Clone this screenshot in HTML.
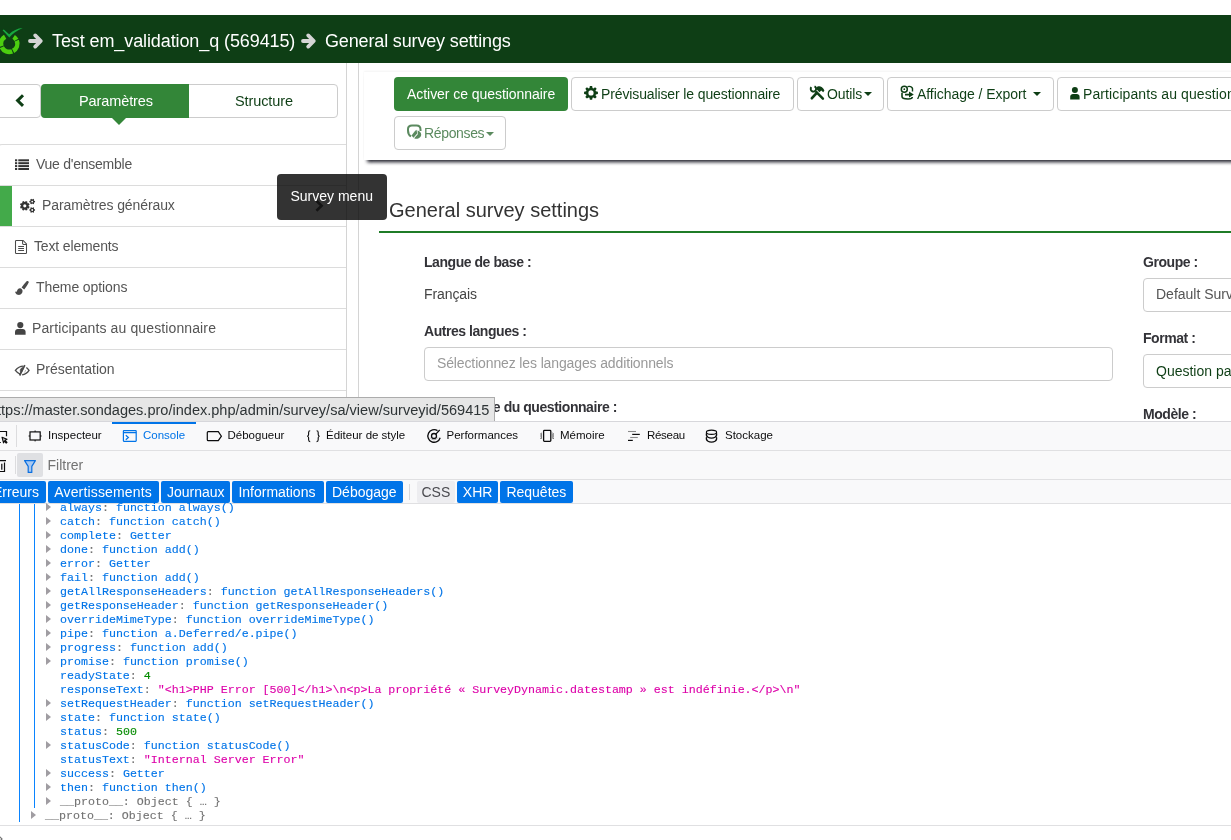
<!DOCTYPE html>
<html><head><meta charset="utf-8">
<style>
*{box-sizing:border-box;margin:0;padding:0}
html,body{width:1231px;height:840px;overflow:hidden;background:#fff;font-family:"Liberation Sans",sans-serif;position:relative}
body{will-change:transform}
.a{position:absolute;white-space:nowrap}
svg{position:absolute;overflow:visible}
#hdr{left:0;top:15px;width:1231px;height:48px;background:#0e3e15}
.htxt{color:#fff;font-size:18px;line-height:18px;letter-spacing:-0.1px}
.vline{position:absolute;width:1px;background:#d4d4d4}
.hl{position:absolute;left:0;width:346px;height:1px;background:#dcdcdc}
.mtxt{font-size:14px;color:#555;line-height:14px}
.btn{position:absolute;height:34px;border:1px solid #ccc;border-radius:4px;background:#fff}
.bt{position:absolute;white-space:nowrap;color:#0e3e15;font-size:14px;line-height:14px}
.lbl{font-weight:bold;font-size:14px;color:#333338;line-height:14px;letter-spacing:-0.45px}
.inp{position:absolute;height:34px;border:1px solid #ccc;border-radius:4px;background:#fff}
.dt{font-size:11.5px;line-height:12px;color:#0c0c0d}
.fb{position:absolute;top:481px;height:22px;background:#0074e8;border-radius:2px;color:#fff;font-size:14px;line-height:14px}
.fb span{position:absolute;top:4px;white-space:nowrap}
.cl{position:absolute;left:60px;font-family:"Liberation Mono",monospace;font-size:11.65px;line-height:14px;color:#0074e8;white-space:pre;-webkit-text-stroke:0.12px currentColor}
.tri{position:absolute;left:46px;width:0;height:0;border-top:4px solid transparent;border-bottom:4px solid transparent;border-left:5.5px solid #a09da2}
.g{color:#058b00}.m{color:#dd00a9}.gr{color:#737373}.cn{color:#8a8a8a}
.caret{position:absolute;width:0;height:0;border-left:4px solid transparent;border-right:4px solid transparent;border-top:4px solid #0e3e15}
</style></head><body>

<!-- ============ header ============ -->
<div id="hdr" class="a"></div>
<svg style="left:0;top:0" width="50" height="64" viewBox="0 0 50 64">
  <g fill="none" stroke="#4ccf10" stroke-width="4.6">
    <path d="M13.64 36.86 A8.15 8.15 0 0 1 16.36 39.81"/>
    <path d="M16.78 40.71 A8.15 8.15 0 0 1 13.09 50.86"/>
    <path d="M12.19 51.28 A8.15 8.15 0 0 1 1.84 47.21"/>
    <path d="M1.47 46.29 A8.15 8.15 0 0 1 5.12 36.64"/>
  </g>
  <path d="M2.6 30.2 L9.3 37.6 C12.5 33.8 17 30.3 22.8 28.0 C17.5 28.3 12.6 30.8 9.1 34.2 L3.8 29.6 Z" fill="#17a83f"/>
  <path d="M30 41 H40 M35.2 35.4 L40.8 41 L35.2 46.6" fill="none" stroke="#d5d5d5" stroke-width="3.8" stroke-linecap="round" stroke-linejoin="round"/>
</svg>
<div class="a htxt" style="left:52px;top:32px">Test em_validation_q (569415)</div>
<svg style="left:273px;top:0" width="50" height="64" viewBox="273 0 50 64">
  <path d="M303 41 H313 M308.2 35.4 L313.8 41 L308.2 46.6" fill="none" stroke="#d5d5d5" stroke-width="3.8" stroke-linecap="round" stroke-linejoin="round"/>
</svg>
<div class="a htxt" style="left:325px;top:32px;letter-spacing:-0.15px">General survey settings</div>

<!-- ============ sidebar ============ -->
<div class="a" style="left:-4px;top:84px;width:45px;height:34px;border:1px solid #ccc;border-radius:4px"></div>
<svg style="left:0;top:0" width="30" height="120" viewBox="0 0 30 120"><path d="M23 95.3 L17.6 100.6 L23 105.9" fill="none" stroke="#0e3e15" stroke-width="3"/></svg>
<div class="a" style="left:41px;top:84px;width:297px;height:34px;border:1px solid #ccc;border-radius:4px"></div>
<div class="a" style="left:41px;top:84px;width:148px;height:34px;background:#338638;border-radius:4px 0 0 4px"></div>
<div class="a" style="left:110.5px;top:117px;width:0;height:0;border-left:8px solid transparent;border-right:8px solid transparent;border-top:8px solid #338638"></div>
<div class="a" style="left:79px;top:93.5px;color:#fff;font-size:14.5px;line-height:14px;letter-spacing:-0.1px">Paramètres</div>
<div class="a" style="left:235px;top:93.5px;color:#0e3e15;font-size:14.5px;line-height:14px;letter-spacing:-0.1px">Structure</div>

<div class="a" style="left:-2px;top:144px;width:349px;height:260px;border:1px solid #dcdcdc;border-radius:4px 0 0 0;border-bottom:none;border-right:none"></div>
<div class="hl" style="top:185px"></div>
<div class="hl" style="top:226px"></div>
<div class="hl" style="top:267px"></div>
<div class="hl" style="top:308px"></div>
<div class="hl" style="top:349px"></div>
<div class="hl" style="top:390px"></div>
<div class="a" style="left:0;top:186px;width:12px;height:40px;background:#43aa4a"></div>

<svg style="left:15px;top:159px" width="14" height="12" viewBox="0 0 14 12" fill="#333">
  <rect x="0" y="0.3" width="2.2" height="2"/><rect x="3.3" y="0.3" width="10.7" height="2"/>
  <rect x="0" y="3.2" width="2.2" height="2"/><rect x="3.3" y="3.2" width="10.7" height="2"/>
  <rect x="0" y="6.1" width="2.2" height="2"/><rect x="3.3" y="6.1" width="10.7" height="2"/>
  <rect x="0" y="9.0" width="2.2" height="2"/><rect x="3.3" y="9.0" width="10.7" height="2"/>
</svg>
<div class="a mtxt" style="left:36px;top:157px;letter-spacing:-0.25px">Vue d'ensemble</div>

<svg style="left:0;top:0" width="10" height="10" viewBox="0 0 10 10" fill="#333" fill-rule="evenodd">
  <path d="M28.49 206.00 L29.58 206.87 L28.94 208.43 L27.56 208.27 L27.27 208.56 L27.43 209.94 L25.87 210.58 L25.00 209.49 L24.60 209.49 L23.73 210.58 L22.17 209.94 L22.33 208.56 L22.04 208.27 L20.66 208.43 L20.02 206.87 L21.11 206.00 L21.11 205.60 L20.02 204.73 L20.66 203.17 L22.04 203.33 L22.33 203.04 L22.17 201.66 L23.73 201.02 L24.60 202.11 L25.00 202.11 L25.87 201.02 L27.43 201.66 L27.27 203.04 L27.56 203.33 L28.94 203.17 L29.58 204.73 L28.49 205.60 Z M26.40 205.80 A1.6 1.6 0 1 0 23.20 205.80 A1.6 1.6 0 1 0 26.40 205.80 Z"/>
  <path d="M33.98 200.69 L35.05 201.05 L35.05 202.15 L33.98 202.51 L33.88 202.68 L34.10 203.79 L33.15 204.34 L32.30 203.60 L32.10 203.60 L31.25 204.34 L30.30 203.79 L30.52 202.68 L30.42 202.51 L29.35 202.15 L29.35 201.05 L30.42 200.69 L30.52 200.52 L30.30 199.41 L31.25 198.86 L32.10 199.60 L32.30 199.60 L33.15 198.86 L34.10 199.41 L33.88 200.52 Z M33.10 201.60 A0.9 0.9 0 1 0 31.30 201.60 A0.9 0.9 0 1 0 33.10 201.60 Z"/>
  <path d="M33.98 209.09 L35.05 209.45 L35.05 210.55 L33.98 210.91 L33.88 211.08 L34.10 212.19 L33.15 212.74 L32.30 212.00 L32.10 212.00 L31.25 212.74 L30.30 212.19 L30.52 211.08 L30.42 210.91 L29.35 210.55 L29.35 209.45 L30.42 209.09 L30.52 208.92 L30.30 207.81 L31.25 207.26 L32.10 208.00 L32.30 208.00 L33.15 207.26 L34.10 207.81 L33.88 208.92 Z M33.10 210.00 A0.9 0.9 0 1 0 31.30 210.00 A0.9 0.9 0 1 0 33.10 210.00 Z"/>
</svg>
<div class="a mtxt" style="left:42px;top:198px;letter-spacing:-0.1px">Paramètres généraux</div>
<svg style="left:0;top:0" width="330" height="220" viewBox="0 0 330 220"><path d="M316.4 200.8 L321.6 205.8 L316.4 210.8" fill="none" stroke="#666" stroke-width="2.6"/></svg>

<svg style="left:0;top:0" width="10" height="10" viewBox="0 0 10 10" fill="none" stroke="#4a4a4a" stroke-width="1.05">
  <path d="M15.5 241.3 Q15.5 240.5 16.3 240.5 H23.1 L26.5 243.9 V252.7 Q26.5 253.5 25.7 253.5 H16.3 Q15.5 253.5 15.5 252.7 Z"/>
  <path d="M22.6 240.7 V243.5 Q22.6 244.4 23.5 244.4 H26.3 M18.2 246.5 H24 M18.2 248.5 H24 M18.2 250.5 H24"/>
</svg>
<div class="a mtxt" style="left:34px;top:239px;letter-spacing:-0.15px">Text elements</div>

<svg style="left:0;top:0" width="10" height="10" viewBox="0 0 10 10" fill="#4a4a4a">
  <path d="M26.9 281.1 C27.9 280.5 29.1 281.4 28.7 282.6 C27.6 285 26 287.4 24.2 289.6 L21.6 287.4 C23.3 285.2 25 282.8 26.9 281.1 Z"/>
  <path d="M20.3 288.3 C22 288.6 23 290.4 22.4 292.3 C21.8 294.2 19.8 295.2 17.8 294.8 C16.4 294.5 15.4 293.3 15 291.4 C15.7 292.1 16.5 292 16.9 291.2 C17.5 289.4 18.6 288.1 20.3 288.3 Z"/>
</svg>
<div class="a mtxt" style="left:36px;top:280px;letter-spacing:-0.1px">Theme options</div>

<svg style="left:15px;top:322px" width="11" height="13" viewBox="0 0 11 13" fill="#444">
  <circle cx="5.3" cy="3.1" r="3.1"/><path d="M0 12.8 V9.8 C0 7.9 1.3 6.9 2.8 6.9 H7.8 C9.3 6.9 10.6 7.9 10.6 9.8 V12.8 Z"/>
</svg>
<div class="a mtxt" style="left:32px;top:321px;letter-spacing:0.12px">Participants au questionnaire</div>

<svg style="left:0;top:0" width="10" height="10" viewBox="0 0 10 10" fill="none" stroke="#4a4a4a">
  <path d="M23.2 366.1 C20.3 366.2 17.4 368 15.4 370.4 C16.8 372.2 18.4 373.5 20.2 374.2" stroke-width="1.4"/>
  <path d="M22.6 367.6 C21 368 20.1 369.4 20.2 370.9 C20.3 371.9 20.7 372.6 21.2 373.1 L23.8 367.7 Z" fill="#4a4a4a" stroke-width="0.6"/>
  <path d="M24.8 365.2 L19.6 375.5" stroke-width="1.7"/>
  <path d="M26.4 367.5 C27.4 368.3 28.3 369.3 29 370.4 C27.4 372.8 24.9 374.5 22.2 374.7" stroke-width="1.4"/>
  <path d="M24.6 372.5 L25.7 370" stroke="#aaa" stroke-width="0.8"/>
</svg>
<div class="a mtxt" style="left:36px;top:362px">Présentation</div>

<div class="vline" style="left:346px;top:63px;height:335px"></div>
<div class="vline" style="left:358px;top:63px;height:335px"></div>

<!-- ============ toolbar ============ -->
<div class="a" style="left:364px;top:72px;width:900px;height:88px;background:#fff;box-shadow:1.5px 3.5px 3.5px -1px rgba(35,35,45,1),0 -1px 2px rgba(0,0,0,0.05)"></div>
<div class="a" style="left:394px;top:77px;width:174px;height:34px;background:#338638;border-radius:4px"></div>
<div class="bt" style="left:407px;top:86.5px;color:#fff;letter-spacing:-0.05px">Activer ce questionnaire</div>

<div class="btn" style="left:571px;top:77px;width:223px"></div>
<svg style="left:0;top:0" width="10" height="10" viewBox="0 0 10 10"><path fill-rule="evenodd" fill="#0e3e15" d="M595.87 91.37 L597.91 91.76 L597.91 94.04 L595.87 94.43 L595.52 95.26 L596.69 96.97 L595.07 98.59 L593.36 97.42 L592.53 97.77 L592.14 99.81 L589.86 99.81 L589.47 97.77 L588.64 97.42 L586.93 98.59 L585.31 96.97 L586.48 95.26 L586.13 94.43 L584.09 94.04 L584.09 91.76 L586.13 91.37 L586.48 90.54 L585.31 88.83 L586.93 87.21 L588.64 88.38 L589.47 88.03 L589.86 85.99 L592.14 85.99 L592.53 88.03 L593.36 88.38 L595.07 87.21 L596.69 88.83 L595.52 90.54 Z M593.60 92.90 A2.6 2.6 0 1 0 588.40 92.90 A2.6 2.6 0 1 0 593.60 92.90 Z"/></svg>
<div class="bt" style="left:601px;top:86.5px;letter-spacing:-0.12px">Prévisualiser le questionnaire</div>

<div class="btn" style="left:797px;top:77px;width:87px"></div>
<svg style="left:0;top:0" width="10" height="10" viewBox="0 0 10 10">
  <path d="M811.9 98.2 L816.8 92.9" stroke="#0e3e15" stroke-width="2.7" stroke-linecap="round"/>
  <path d="M816.4 92.2 L822.9 98.6" stroke="#0e3e15" stroke-width="2.5" stroke-linecap="round"/>
  <path d="M811.3 87.2 A2.7 2.7 0 1 0 814.5 86.4" fill="none" stroke="#0e3e15" stroke-width="1.9"/>
  <path d="M816.3 87.6 C817.5 86.2 819.8 85.8 821.6 86.9 C822.9 87.7 823.8 89 824.4 90.6 L823.2 92.2 L821.3 90.6 L819.4 92.2 L816.8 89.6 Z" fill="#0e3e15"/>
</svg>
<div class="bt" style="left:827px;top:86.5px;letter-spacing:-0.1px">Outils</div>
<div class="caret" style="left:863.5px;top:92px"></div>

<div class="btn" style="left:887px;top:77px;width:167px"></div>
<svg style="left:0;top:0" width="10" height="10" viewBox="0 0 10 10">
  <circle cx="904.3" cy="89.2" r="3" fill="none" stroke="#0e3e15" stroke-width="1.5"/>
  <circle cx="904.3" cy="89.2" r="0.9" fill="#0e3e15"/>
  <path d="M907.5 86.6 C909.5 86.2 912 86.8 912.5 88.5 L912.5 91.5" fill="none" stroke="#0e3e15" stroke-width="1.4"/>
  <path d="M902 92.8 V96.5 C902 98.3 905 99 908 99 C910.5 99 912.3 98.3 912.3 97" fill="none" stroke="#0e3e15" stroke-width="1.6"/>
  <path d="M905 93.8 H909 V91.6 L913.8 94.6 L909 97.6 V95.6 H905 Z" fill="#0e3e15"/>
</svg>
<div class="bt" style="left:917px;top:86.5px;letter-spacing:-0.05px">Affichage / Export</div>
<div class="caret" style="left:1033px;top:92px"></div>

<div class="btn" style="left:1057px;top:77px;width:200px"></div>
<svg style="left:0;top:0" width="10" height="10" viewBox="0 0 10 10" fill="#0e3e15">
  <circle cx="1074.9" cy="89.9" r="3"/><path d="M1070.2 99.5 V96.8 C1070.2 95 1071.5 94 1073 94 H1076.8 C1078.3 94 1079.6 95 1079.6 96.8 V99.5 Z"/>
</svg>
<div class="bt" style="left:1083px;top:86.5px;letter-spacing:0.1px">Participants au questionnaire</div>

<div class="btn" style="left:394px;top:116px;width:112px"></div>
<svg style="left:0;top:0" width="10" height="10" viewBox="0 0 10 10">
  <path d="M411 136.5 C408.5 135 408 133 408 130.5 V129 C408 126.8 409.5 125.5 412 125.5 H416.5 C419 125.5 420.5 127 420.5 129.5 V131" fill="none" stroke="#5b8a5f" stroke-width="2"/>
  <path d="M411.5 135.5 L415 131 L416.5 129.8 L417.2 133.5 L413.5 137.8 Z" fill="#5b8a5f"/>
  <path d="M417.5 130.5 C419.5 131 421.2 132.5 421.2 134.5 C421.2 137 419 138.8 416.5 138.8 C415.5 138.8 414.8 138.5 414.2 138.2 L417.8 134.2 Z" fill="#5b8a5f"/>
</svg>
<div class="bt" style="left:424px;top:125.5px;color:#5b8a5f;letter-spacing:-0.35px">Réponses</div>
<div class="caret" style="left:485.5px;top:131.5px;border-top-color:#5b8a5f"></div>

<!-- ============ content ============ -->
<div class="a" style="left:389px;top:199.5px;color:#333;font-size:20px;line-height:20px">General survey settings</div>
<div class="a" style="left:379px;top:231px;width:852px;height:2px;background:#1f7c27"></div>

<div class="a lbl" style="left:424px;top:255px">Langue de base :</div>
<div class="a" style="left:424px;top:287px;color:#444;font-size:14px;line-height:14px;letter-spacing:-0.1px">Français</div>
<div class="a lbl" style="left:424px;top:324px">Autres langues :</div>
<div class="inp" style="left:424px;top:347px;width:689px"></div>
<div class="a" style="left:437px;top:356px;color:#999;font-size:14px;line-height:14px;letter-spacing:-0.13px">Sélectionnez les langages additionnels</div>
<div class="a lbl" style="left:427px;top:400px">Propriétaire du questionnaire :</div>

<div class="a lbl" style="left:1143px;top:255px">Groupe :</div>
<div class="inp" style="left:1143px;top:278px;width:120px"></div>
<div class="a" style="left:1156px;top:287px;color:#555;font-size:14px;line-height:14px">Default Survey</div>
<div class="a lbl" style="left:1143px;top:331px">Format :</div>
<div class="inp" style="left:1143px;top:354px;width:120px"></div>
<div class="a" style="left:1156px;top:363.5px;color:#0e3e15;font-size:14px;line-height:14px">Question par question</div>
<div class="a lbl" style="left:1143px;top:407px">Modèle :</div>

<!-- ============ tooltip ============ -->
<div class="a" style="left:277px;top:174px;width:110px;height:46px;background:rgba(0,0,0,0.8);border-radius:4px"></div>
<div class="a" style="left:290.5px;top:189px;color:#fff;font-size:14px;line-height:14px">Survey menu</div>

<!-- ============ status bar ============ -->
<div class="a" style="left:-2px;top:397px;width:497px;height:25px;background:#e6e6e6;border:1px solid #acacac;border-left:none;border-bottom:none"></div>
<div class="a" style="left:-3px;top:403px;color:#2e3436;font-size:14.56px;line-height:15px">ttps://master.sondages.pro/index.php/admin/survey/sa/view/surveyid/569415</div>

<!-- ============ devtools ============ -->
<div class="a" style="left:0;top:421px;width:1231px;height:419px;background:#fff"></div>
<div class="a" style="left:0;top:421px;width:1231px;height:82px;background:#f9f9fa;border-top:1px solid #d7d7db"></div>
<div class="a" style="left:0;top:450px;width:1231px;height:1px;background:#e0e0e2"></div>
<div class="a" style="left:0;top:479px;width:1231px;height:1px;background:#e0e0e2"></div>
<div class="a" style="left:0;top:503px;width:1231px;height:1px;background:#e0e0e2"></div>

<div class="a" style="left:112px;top:422px;width:84px;height:2px;background:#0074e8"></div>
<div class="a" style="left:16px;top:425px;width:1px;height:22px;background:#dcdcde"></div>

<svg style="left:0;top:0" width="10" height="10" viewBox="0 0 10 10" fill="none" stroke="#0c0c0d" stroke-width="1.1">
  <!-- picker -->
  <path d="M-4 431.5 H6.5 V436.2 M-4 442.5 H0.8" stroke-width="1.2"/>
  <path d="M2 437.2 L7 439.2 L5.1 440.3 L7 442.4 L6.2 443.1 L4.3 441.1 L3.5 442.9 Z" fill="#bbb" stroke-width="1.1" stroke-linejoin="round"/>
  <!-- inspector -->
  <rect x="30" y="431.9" width="10.2" height="8.1" stroke-width="1.2"/>
  <path d="M35.1 430.5 V431.9 M35.1 440 V441.4 M28.6 436 H30 M40.2 436 H41.6" stroke-width="1"/>
  <!-- console -->
  <g stroke="#0074e8" stroke-width="1.2">
    <rect x="123.4" y="430.7" width="12.8" height="10.6" rx="0.5"/>
    <path d="M123.4 432.6 H136.2 M125.8 435.2 L128.4 437.5 L125.8 439.8"/>
  </g>
  <!-- debugger -->
  <path d="M208.2 431.7 H218.3 L221.4 436.2 L218.3 440.7 H208.2 C207.6 440.7 207.3 440.3 207.3 439.8 V432.6 C207.3 432 207.7 431.7 208.2 431.7 Z" stroke-width="1.2"/>
  <!-- perf -->
  <path d="M440.2 437.8 A6.3 6.3 0 1 1 437.5 430.6" stroke-width="1.3"/>
  <circle cx="434" cy="436" r="2.5" stroke-width="1.3"/>
  <path d="M435.8 434.2 L439.7 430" stroke-width="1.2"/>
  <path d="M430.2 437.5 A4.2 4.2 0 0 0 437.8 437.5" stroke="#9a9a9a" stroke-width="0.8"/>
  <!-- memory -->
  <rect x="543.6" y="430.4" width="7.2" height="11" rx="0.8" stroke-width="1.3"/>
  <path d="M541.8 433 L540.6 434 L541.8 435 L540.6 436 L541.8 437 L540.6 438 L541.6 439 M552.4 433 L553.6 434 L552.4 435 L553.6 436 L552.4 437 L553.6 438 L552.6 439" stroke="#333" stroke-width="0.9"/>
  <!-- network -->
  <path d="M628 431.5 H636" stroke="#8a8a8a" stroke-width="1.1"/>
  <path d="M632.2 434.4 H639.8" stroke-width="1.2"/>
  <path d="M630.2 437.5 H637.8" stroke="#8a8a8a" stroke-width="1.1"/>
  <path d="M628 440.4 H632.8" stroke-width="1.2"/>
  <!-- storage -->
  <ellipse cx="711.5" cy="432.3" rx="5.1" ry="2.1" stroke-width="1.2"/>
  <path d="M706.5 433.2 C706 435.2 706.6 436.6 708 437.3 C709 437.9 710.2 438.1 711.5 438.1 C712.8 438.1 714 437.9 715 437.3 C716.4 436.6 717 435.2 716.5 433.2" stroke-width="1.2"/>
  <path d="M706.5 437.2 C706 439.2 706.6 440.6 708 441.3 C709 441.9 710.2 442.1 711.5 442.1 C712.8 442.1 714 441.9 715 441.3 C716.4 440.6 717 439.2 716.5 437.2" stroke-width="1.2"/>
  <!-- trash -->
  <path d="M-3 460.7 H6 M-1 462.5 V471.5 H4.5 V462.5 M1.8 463.8 V469.8" stroke-width="1.2"/>
</svg>

<svg style="left:0;top:0" width="10" height="10" viewBox="0 0 10 10" fill="none" stroke="#0c0c0d" stroke-width="1.1">
  <path d="M310.2 430.8 C309 430.8 308.6 431.4 308.6 432.6 V434.6 C308.6 435.6 308.1 436.1 307.2 436.2 C308.1 436.3 308.6 436.8 308.6 437.8 V439.8 C308.6 441 309 441.6 310.2 441.6"/>
  <path d="M316.6 430.8 C317.8 430.8 318.2 431.4 318.2 432.6 V434.6 C318.2 435.6 318.7 436.1 319.6 436.2 C318.7 436.3 318.2 436.8 318.2 437.8 V439.8 C318.2 441 317.8 441.6 316.6 441.6"/>
</svg>

<div class="a dt" style="left:48px;top:429px">Inspecteur</div>
<div class="a dt" style="left:143px;top:429px;color:#0074e8">Console</div>
<div class="a dt" style="left:227.5px;top:429px">Débogueur</div>
<div class="a dt" style="left:326px;top:429px">Éditeur de style</div>
<div class="a dt" style="left:446.5px;top:429px">Performances</div>
<div class="a dt" style="left:560px;top:429px">Mémoire</div>
<div class="a dt" style="left:647px;top:429px;letter-spacing:-0.3px">Réseau</div>
<div class="a dt" style="left:725px;top:429px">Stockage</div>

<div class="a" style="left:15px;top:456px;width:1px;height:18px;background:#dcdcde"></div>
<div class="a" style="left:17px;top:453px;width:26px;height:24px;background:#dfe0e3;border-radius:2px"></div>
<svg style="left:0;top:0" width="10" height="10" viewBox="0 0 10 10">
  <path d="M24.6 460.6 H35.4 L31.8 466.4 V472.4 H28.2 V466.4 Z" fill="#a9c8f0" stroke="#0a6fe0" stroke-width="1.2" stroke-linejoin="round"/>
</svg>
<div class="a" style="left:47.5px;top:457.5px;color:#737373;font-size:14px;line-height:14px">Filtrer</div>

<div class="fb" style="left:-10px;width:55.7px"><span style="left:3px">Erreurs</span></div>
<div class="fb" style="left:48.3px;width:110.5px"><span style="left:6px;letter-spacing:0.15px">Avertissements</span></div>
<div class="fb" style="left:161.4px;width:68.4px"><span style="left:5.5px">Journaux</span></div>
<div class="fb" style="left:232.4px;width:91.2px"><span style="left:6px">Informations</span></div>
<div class="fb" style="left:326.3px;width:76.5px"><span style="left:5.7px">Débogage</span></div>
<div class="a" style="left:409px;top:484px;width:1px;height:16px;background:#d7d7db"></div>
<div class="fb" style="left:416.5px;width:38.2px;background:#ededf0;color:#4a4a4f"><span style="left:5px">CSS</span></div>
<div class="fb" style="left:457.3px;width:40.5px"><span style="left:5.5px">XHR</span></div>
<div class="fb" style="left:500.4px;width:72.6px"><span style="left:6px">Requêtes</span></div>

<!-- console -->
<div class="a" style="left:19px;top:504px;width:1px;height:318px;background:#0a84ff"></div>
<div class="a" style="left:34px;top:504px;width:1px;height:304px;background:#0a84ff"></div>
<div class="a" style="left:0;top:825px;width:1231px;height:1px;background:#e0e0e2"></div>
<svg style="left:0;top:0" width="10" height="10" viewBox="0 0 10 10"><path d="M-1 836 L2 839 L-1 842" fill="none" stroke="#737373" stroke-width="1.2"/></svg>
<div id="console">
<div class="tri" style="left:46px;top:502.9px"></div>
<div class="cl" style="left:60px;top:500.5px">always<span class="gr">:</span> function always()</div>
<div class="tri" style="left:46px;top:516.9px"></div>
<div class="cl" style="left:60px;top:514.5px">catch<span class="gr">:</span> function catch()</div>
<div class="tri" style="left:46px;top:530.9px"></div>
<div class="cl" style="left:60px;top:528.5px">complete<span class="gr">:</span> Getter</div>
<div class="tri" style="left:46px;top:544.9px"></div>
<div class="cl" style="left:60px;top:542.5px">done<span class="gr">:</span> function add()</div>
<div class="tri" style="left:46px;top:558.9px"></div>
<div class="cl" style="left:60px;top:556.5px">error<span class="gr">:</span> Getter</div>
<div class="tri" style="left:46px;top:572.9px"></div>
<div class="cl" style="left:60px;top:570.5px">fail<span class="gr">:</span> function add()</div>
<div class="tri" style="left:46px;top:586.9px"></div>
<div class="cl" style="left:60px;top:584.5px">getAllResponseHeaders<span class="gr">:</span> function getAllResponseHeaders()</div>
<div class="tri" style="left:46px;top:600.9px"></div>
<div class="cl" style="left:60px;top:598.5px">getResponseHeader<span class="gr">:</span> function getResponseHeader()</div>
<div class="tri" style="left:46px;top:614.9px"></div>
<div class="cl" style="left:60px;top:612.5px">overrideMimeType<span class="gr">:</span> function overrideMimeType()</div>
<div class="tri" style="left:46px;top:628.9px"></div>
<div class="cl" style="left:60px;top:626.5px">pipe<span class="gr">:</span> function a.Deferred/e.pipe()</div>
<div class="tri" style="left:46px;top:642.9px"></div>
<div class="cl" style="left:60px;top:640.5px">progress<span class="gr">:</span> function add()</div>
<div class="tri" style="left:46px;top:656.9px"></div>
<div class="cl" style="left:60px;top:654.5px">promise<span class="gr">:</span> function promise()</div>
<div class="cl" style="left:60px;top:668.5px">readyState<span class="gr">:</span> <span class="g">4</span></div>
<div class="cl" style="left:60px;top:682.5px">responseText<span class="gr">:</span> <span class="m">&quot;&lt;h1&gt;PHP Error [500]&lt;/h1&gt;\n&lt;p&gt;La propriété « SurveyDynamic.datestamp » est indéfinie.&lt;/p&gt;\n&quot;</span></div>
<div class="tri" style="left:46px;top:698.9px"></div>
<div class="cl" style="left:60px;top:696.5px">setRequestHeader<span class="gr">:</span> function setRequestHeader()</div>
<div class="tri" style="left:46px;top:712.9px"></div>
<div class="cl" style="left:60px;top:710.5px">state<span class="gr">:</span> function state()</div>
<div class="cl" style="left:60px;top:724.5px">status<span class="gr">:</span> <span class="g">500</span></div>
<div class="tri" style="left:46px;top:740.9px"></div>
<div class="cl" style="left:60px;top:738.5px">statusCode<span class="gr">:</span> function statusCode()</div>
<div class="cl" style="left:60px;top:752.5px">statusText<span class="gr">:</span> <span class="m">&quot;Internal Server Error&quot;</span></div>
<div class="tri" style="left:46px;top:768.9px"></div>
<div class="cl" style="left:60px;top:766.5px">success<span class="gr">:</span> Getter</div>
<div class="tri" style="left:46px;top:782.9px"></div>
<div class="cl" style="left:60px;top:780.5px">then<span class="gr">:</span> function then()</div>
<div class="tri" style="left:46px;top:796.9px"></div>
<div class="cl" style="left:60px;top:794.5px"><span class="gr">__proto__: Object { … }</span></div>
<div class="tri" style="left:31px;top:810.9px"></div>
<div class="cl" style="left:45px;top:808.5px"><span class="gr">__proto__: Object { … }</span></div>
</div>
</body></html>
